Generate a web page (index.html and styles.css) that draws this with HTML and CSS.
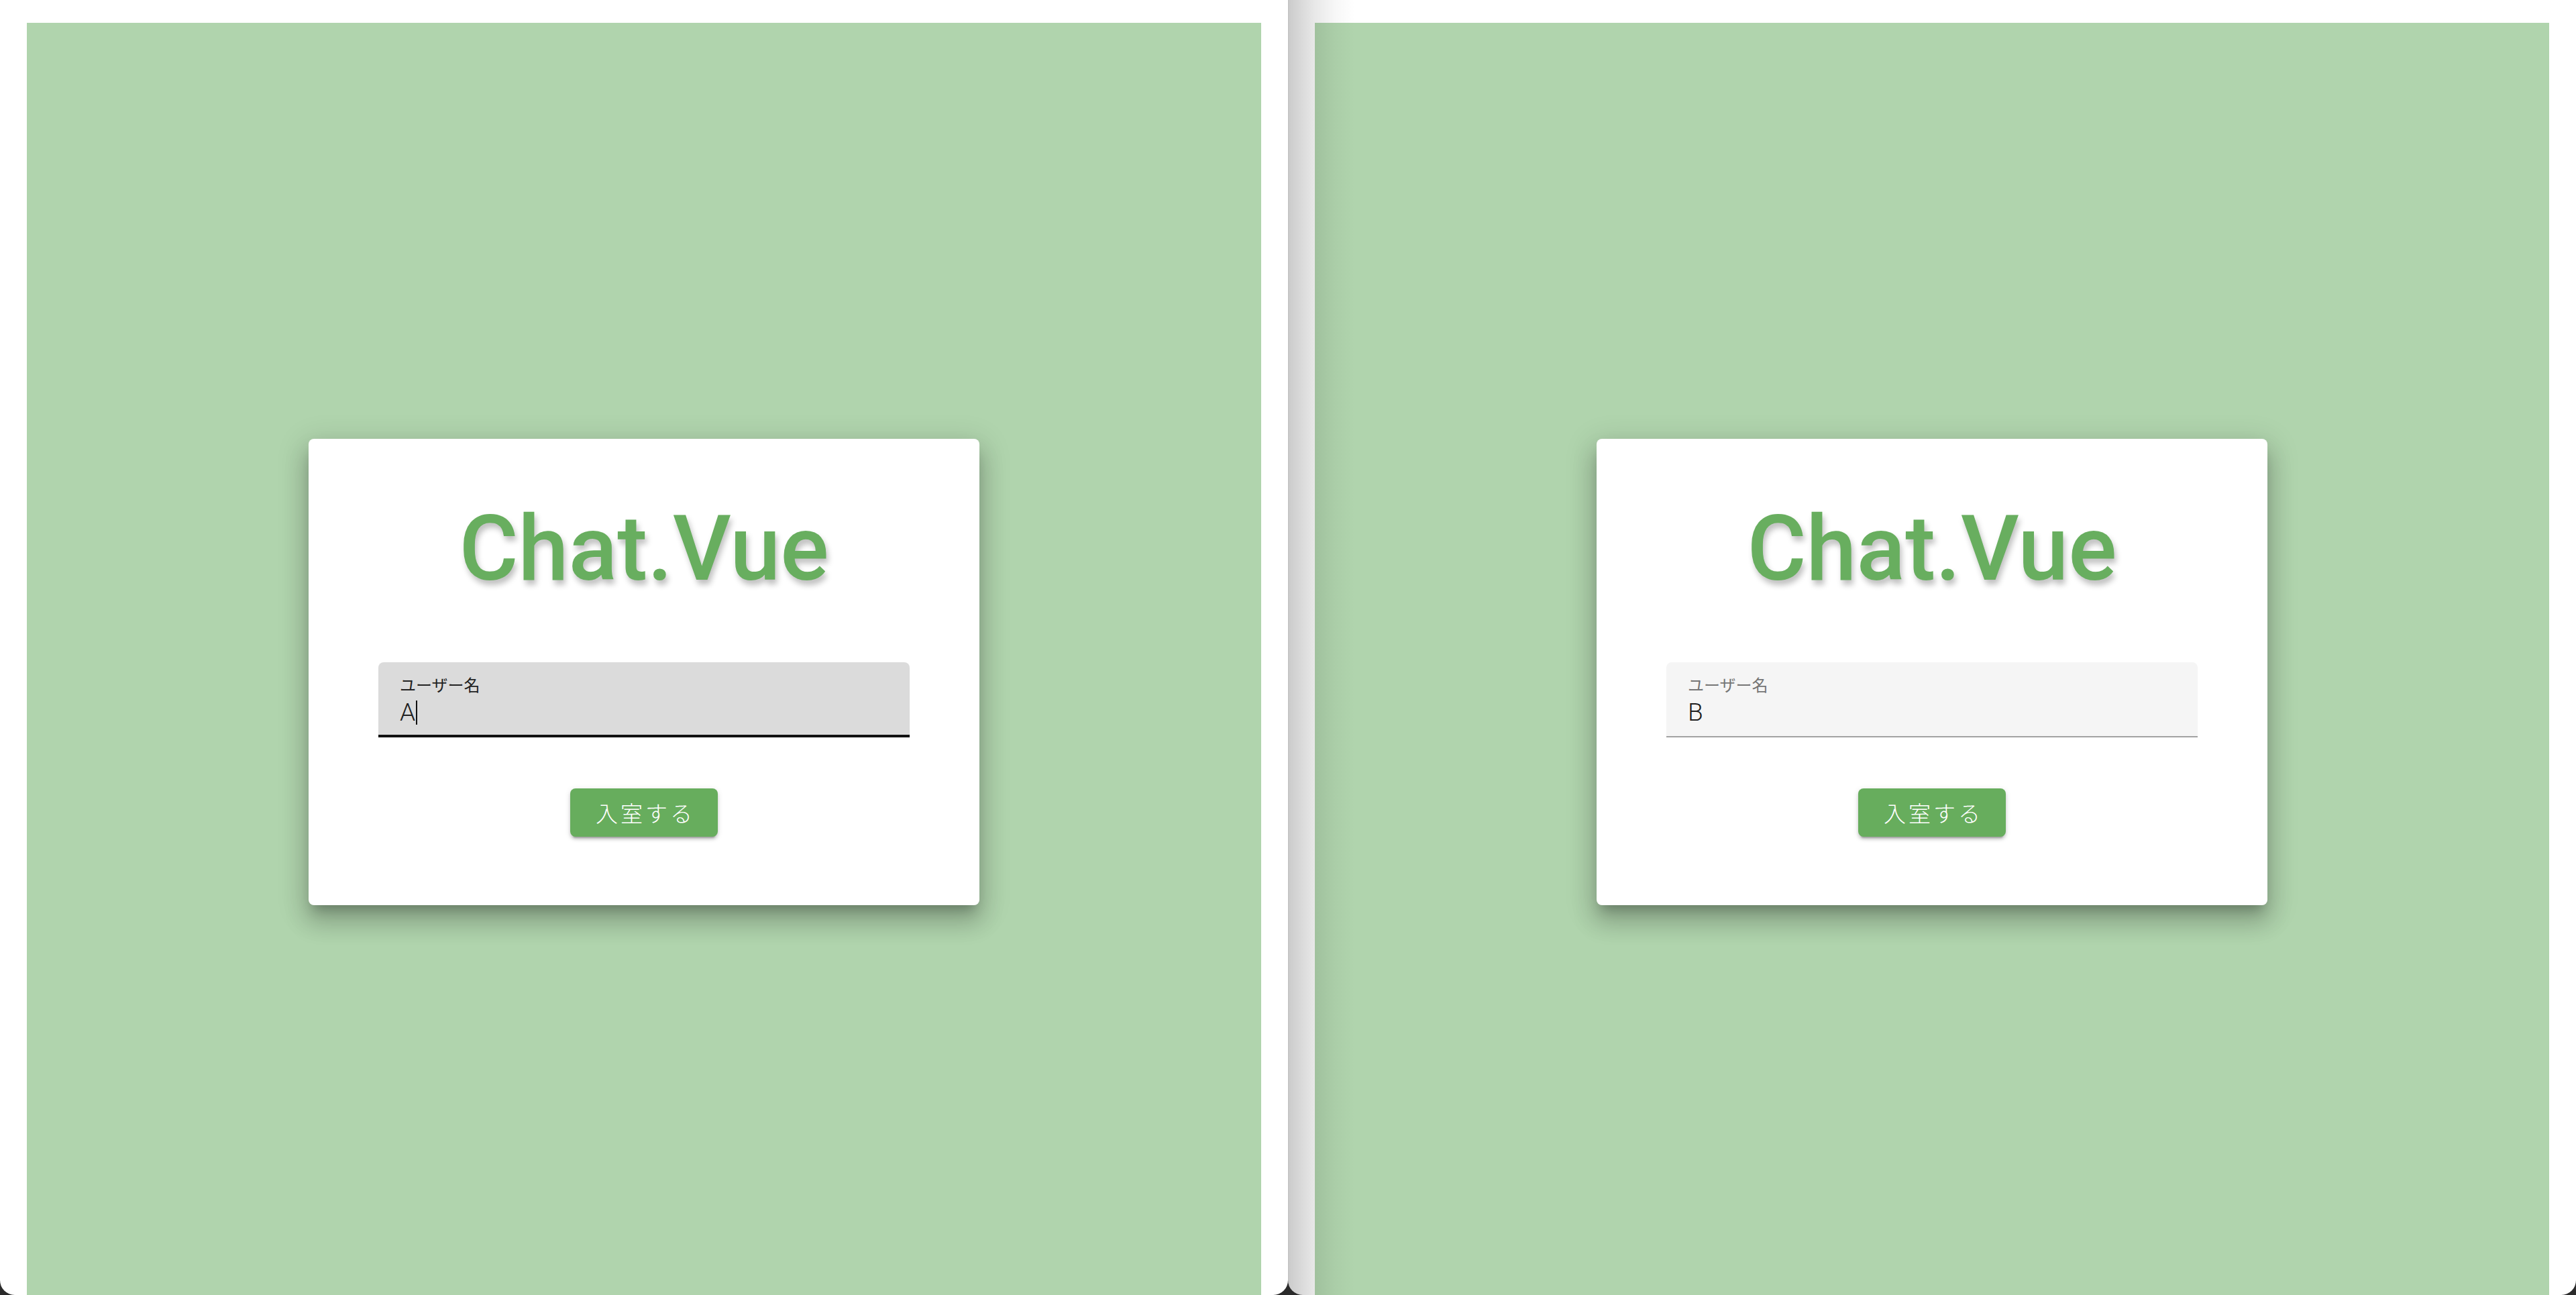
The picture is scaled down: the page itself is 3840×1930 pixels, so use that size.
FILE: index.html
```html
<!DOCTYPE html>
<html lang="ja">
<head>
<meta charset="utf-8">
<title>Chat.Vue</title>
<link rel="stylesheet" href="styles.css">
</head>
<body>
<div class="screen">
  <div class="window window-left">
    <div class="stage">
      <div class="card">
        <h1 class="title">Chat.Vue</h1>
        <div class="field field-focused">
          <div class="field-label">ユーザー名</div>
          <div class="field-value">A<span class="caret"></span></div>
        </div>
        <div class="actions">
          <button class="btn">入室する</button>
        </div>
      </div>
    </div>
  </div>
  <div class="window window-right">
    <div class="stage">
      <div class="card">
        <h1 class="title">Chat.Vue</h1>
        <div class="field">
          <div class="field-label">ユーザー名</div>
          <div class="field-value">B</div>
        </div>
        <div class="actions">
          <button class="btn">入室する</button>
        </div>
      </div>
    </div>
  </div>
</div>
</body>
</html>
```

FILE: styles.css
```css
html, body {
  margin: 0;
  padding: 0;
  width: 3840px;
  height: 1930px;
  overflow: hidden;
  background: #2b2b2b;
}

.screen {
  display: flex;
  width: 3840px;
  height: 1930px;
}

.window {
  position: relative;
  width: 1920px;
  height: 1930px;
  background: #ffffff;
  border-radius: 0 0 22px 22px;
  box-sizing: border-box;
  padding: 34px 40px 0 40px;
  display: flex;
  overflow: hidden;
}

.window-right::before {
  content: "";
  position: absolute;
  left: 0;
  top: 0;
  bottom: 0;
  width: 100px;
  background: linear-gradient(to right,
    rgba(0, 0, 0, 0.26) 0px,
    rgba(0, 0, 0, 0.2) 2px,
    rgba(0, 0, 0, 0.09) 40px,
    rgba(0, 0, 0, 0.03) 70px,
    rgba(0, 0, 0, 0) 100px);
  pointer-events: none;
  z-index: 2;
}

.stage {
  flex: 1;
  background: #b0d4ad;
  display: flex;
  justify-content: center;
  align-items: flex-start;
  padding-top: 620px;
}

.card {
  width: 1000px;
  box-sizing: border-box;
  background: #ffffff;
  border-radius: 8px;
  padding: 89px 104px 102px 104px;
  box-shadow:
    0 14px 16px -8px rgba(0, 0, 0, 0.22),
    0 24px 34px 4px rgba(0, 0, 0, 0.16),
    0 10px 44px 8px rgba(0, 0, 0, 0.12);
  font-family: "Noto Sans CJK JP", "Noto Sans", sans-serif;
}

.title {
  margin: 0;
  text-align: center;
  font-family: "Roboto", "Liberation Sans", Arial, sans-serif;
  font-weight: 500;
  font-size: 135px;
  line-height: 150px;
  color: #68ae5f;
  text-shadow: 3px 7px 9px rgba(0, 0, 0, 0.25);
  letter-spacing: 0;
}

.field {
  margin-top: 94px;
  height: 112px;
  box-sizing: border-box;
  background: #f5f5f5;
  border-radius: 8px 8px 0 0;
  border-bottom: 2px solid #a2a2a2;
  padding: 21px 32px 0 32px;
}

.field-focused {
  background: #dbdbdb;
  border-bottom: 4px solid #111111;
}

.field-label {
  font-size: 24px;
  line-height: 24px;
  color: #757575;
  font-weight: 400;
}

.field-focused .field-label {
  color: #222222;
}

.field-value {
  margin-top: 8px;
  font-family: "Roboto", "Noto Sans", sans-serif;
  font-weight: 300;
  font-size: 37px;
  line-height: 44px;
  color: #1f1f1f;
  display: flex;
  align-items: center;
}

.caret {
  display: inline-block;
  width: 2px;
  height: 36px;
  background: #111111;
  margin-left: 1px;
}

.actions {
  display: flex;
  justify-content: center;
  margin-top: 76px;
}

.btn {
  width: 220px;
  height: 72px;
  border: none;
  border-radius: 8px;
  background: #67ad5d;
  color: #ffffff;
  font-family: "Noto Sans CJK JP", "Noto Sans", sans-serif;
  font-weight: 300;
  font-size: 33px;
  letter-spacing: 4px;
  padding: 0 0 0 4px;
  box-shadow:
    0 6px 2px -4px rgba(0, 0, 0, 0.2),
    0 4px 4px 0 rgba(0, 0, 0, 0.14),
    0 2px 10px 0 rgba(0, 0, 0, 0.12);
  cursor: pointer;
}
```
